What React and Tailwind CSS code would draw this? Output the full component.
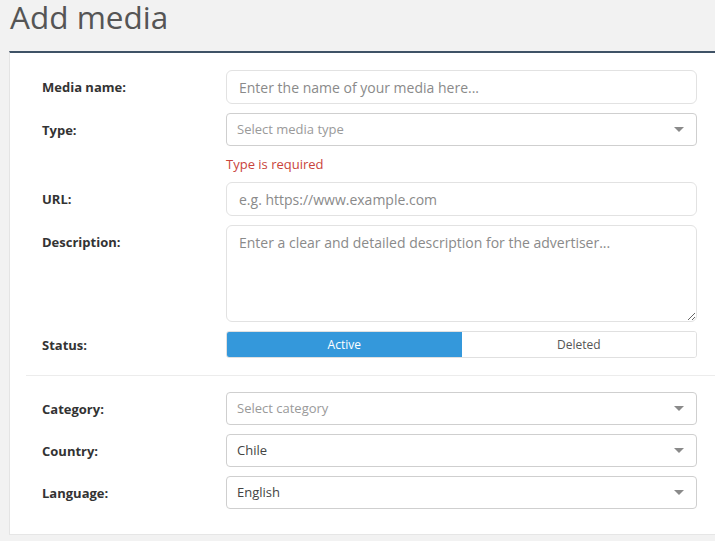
import React from "react";

const Caret = () => (
	<svg width="10" height="6" viewBox="0 0 10 6" className="shrink-0">
		<path d="M0 0 L10 0 L5 5 Z" fill="#8a8a8a" />
	</svg>
);

const Row = ({ label, top, labelClass = "h-[34px]", children }) => (
	<div className={`flex pl-4 pr-[18px] ${top ? "items-start" : "items-center"}`}>
		<label
			className={`w-[184px] shrink-0 flex items-center pt-[2px] text-[13px] font-bold text-[#333] ${labelClass}`}
		>
			{label}
		</label>
		<div className="flex-1 min-w-0">{children}</div>
	</div>
);

const SelectBox = ({ value, placeholder }) => (
	<div className="h-[33px] border border-[#cfcfcf] rounded-[4px] bg-white flex items-center justify-between pl-[10px] pr-[12px]">
		<span className={`text-[13px] ${value ? "text-[#444]" : "text-[#9a9a9a]"}`}>
			{value || placeholder}
		</span>
		<Caret />
	</div>
);

const TextInput = ({ placeholder }) => (
	<input
		type="text"
		placeholder={placeholder}
		className="w-full h-[34px] border border-[#e2e2e2] rounded-[6px] px-3 text-[14px] text-[#333] placeholder:text-[#8a8a8a] outline-none bg-white"
	/>
);

const App = () => {
	return (
		<div
			className="min-h-[541px] bg-[#f2f2f2] pl-[9px]"
			style={{ fontFamily: '"Open Sans", "Liberation Sans", sans-serif' }}
		>
			<h1 className="text-[31.5px] leading-[34px] text-[#555] pl-[1px] font-normal">Add media</h1>
			<div className="mt-[17px] bg-white border-t-2 border-t-[#3f5266] border-l border-l-[#e4e4e4] border-b border-b-[#e6e6e6] pl-4 pt-[17px] pb-[25px]">
				<div className="flex flex-col gap-[9px]">
					<Row label="Media name:">
						<TextInput placeholder="Enter the name of your media here..." />
					</Row>
					<Row label="Type:" top labelClass="h-[33px]">
						<SelectBox placeholder="Select media type" />
						<p className="mt-[9px] text-[13px] leading-[18px] text-[#c9443c]">Type is required</p>
					</Row>
					<Row label="URL:">
						<TextInput placeholder="e.g. https://www.example.com" />
					</Row>
					<Row label="Description:" top>
						<textarea
							placeholder="Enter a clear and detailed description for the advertiser..."
							className="block w-full h-[97px] border border-[#e2e2e2] rounded-[6px] px-3 pt-[6px] text-[14px] text-[#333] placeholder:text-[#8a8a8a] outline-none bg-white"
						/>
					</Row>
					<Row label="Status:" labelClass="h-[27px]">
						<div className="flex h-[27px] border border-[#e0e0e0] rounded-[3px] overflow-hidden">
							<button className="w-1/2 bg-[#3498db] text-white text-[12px]">Active</button>
							<button className="w-1/2 bg-white text-[#555] text-[12px]">Deleted</button>
						</div>
					</Row>
				</div>
				<div className="mt-[17px] mb-[16px] border-t border-[#ececec]" />
				<div className="flex flex-col gap-[9px]">
					<Row label="Category:" labelClass="h-[33px]">
						<SelectBox placeholder="Select category" />
					</Row>
					<Row label="Country:" labelClass="h-[33px]">
						<SelectBox value="Chile" />
					</Row>
					<Row label="Language:" labelClass="h-[33px]">
						<SelectBox value="English" />
					</Row>
				</div>
			</div>
		</div>
	);
};

export default App;
